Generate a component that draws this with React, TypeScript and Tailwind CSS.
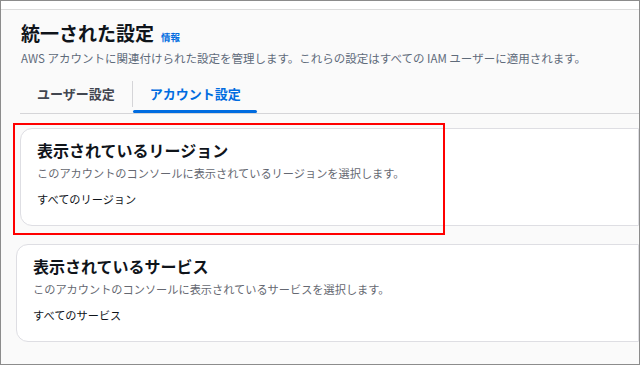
import React from 'react'

const font = { fontFamily: '"Noto Sans CJK JP", "Noto Sans", sans-serif' }

const SettingCard = ({ title, desc, value, className }: { title: string; desc: string; value: string; className: string }) => (
  <div className={`h-[98px] bg-white border border-[#dedee3] rounded-l-[12px] pl-[16px] pt-[11px] ${className}`}>
    <h3 className="text-[16px] leading-[20px] font-bold text-[#0f141a]">{title}</h3>
    <p className="mt-[6px] text-[11.2px] leading-[14px] text-[#656871]">{desc}</p>
    <p className="mt-[12px] text-[11.2px] leading-[14px] text-[#0f141a]">{value}</p>
  </div>
)

export default function App() {
  return (
    <div style={font} className="relative w-[640px] h-[365px] overflow-hidden border border-[#8c8c8c] bg-[#fafafa]">
      <div className="h-[9px] bg-white border-b border-[#dcdcdc]" />

      <div className="pl-[19px] pt-[11px]">
        <div className="flex items-baseline gap-[7px] pl-[1px]">
          <h1 className="text-[19px] leading-[24px] font-bold text-[#0f141a]">統一された設定</h1>
          <span className="text-[9.5px] font-bold text-[#006ce0]">情報</span>
        </div>
        <p className="mt-[5px] pl-[1px] text-[11.5px] leading-[16px] text-[#5f6b7a]">
          AWS アカウントに関連付けられた設定を管理します。これらの設定はすべての IAM ユーザーに適用されます。
        </p>

        <div className="mt-[16px] flex border-b border-[#d5d5d8]">
          <div className="h-[31px] pl-[17px] pr-[17px] flex items-start pt-[2px] text-[13px] font-bold text-[#424650]">
            ユーザー設定
          </div>
          <div className="w-px h-[26px] bg-[#d5d5d8] mt-[-1px]" />
          <div className="relative h-[31px] pl-[17px] pr-[16px] flex items-start pt-[2px] text-[13px] font-bold text-[#006ce0]">
            アカウント設定
            <span className="absolute left-0 right-0 bottom-[0px] h-[3px] rounded-full bg-[#006ce0]" />
          </div>
        </div>
      </div>

      <div className="mt-[14px] flex flex-col gap-[18px]">
        <SettingCard
          className="ml-[19px]"
          title="表示されているリージョン"
          desc="このアカウントのコンソールに表示されているリージョンを選択します。"
          value="すべてのリージョン"
        />
        <SettingCard
          className="ml-[15px]"
          title="表示されているサービス"
          desc="このアカウントのコンソールに表示されているサービスを選択します。"
          value="すべてのサービス"
        />
      </div>

      <div className="absolute left-[12px] top-[122px] w-[432px] h-[112px] border-2 border-[#ff0000] pointer-events-none" />
    </div>
  )
}
